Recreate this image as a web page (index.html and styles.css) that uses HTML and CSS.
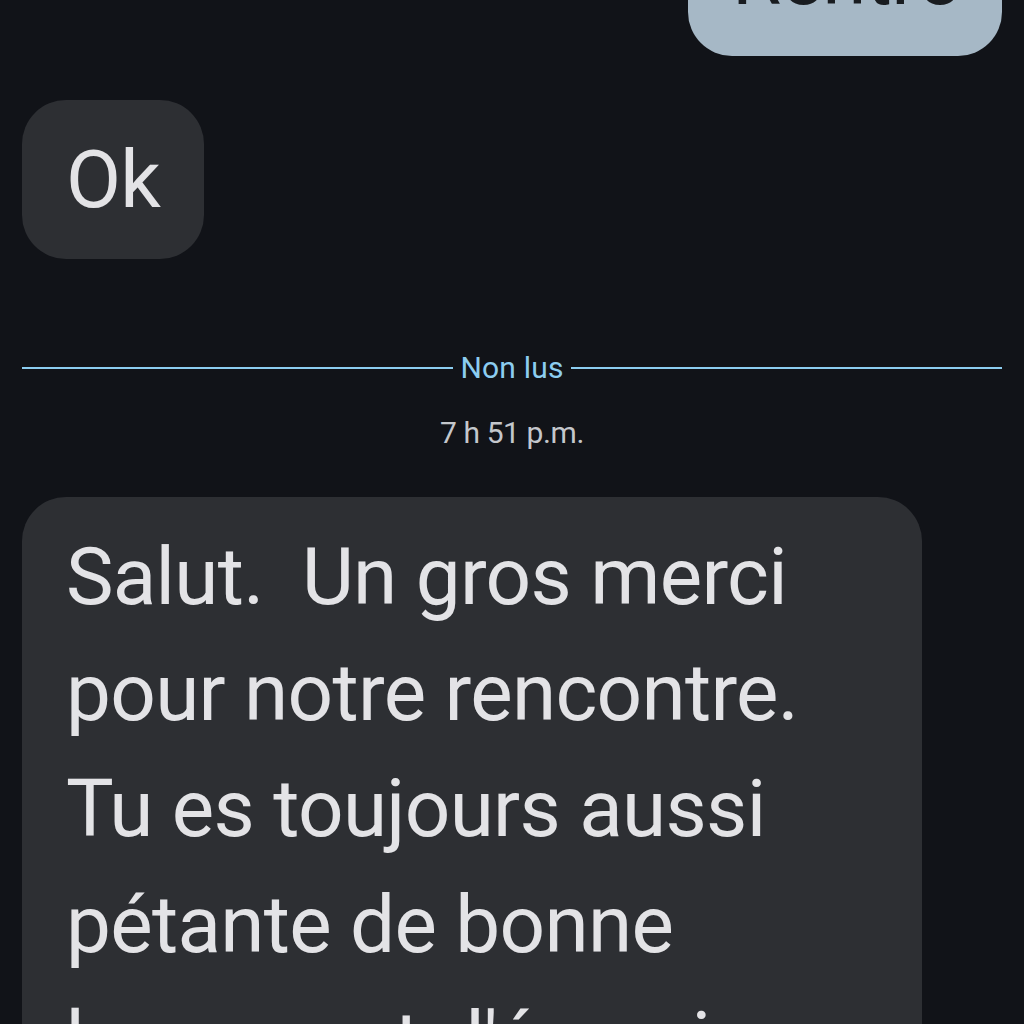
FILE: index.html
```html
<!DOCTYPE html>
<html lang="fr">
<head>
<meta charset="utf-8">
<link rel="stylesheet" href="styles.css">
</head>
<body>
<main class="thread">
  <div class="row row-out first">
    <div class="bubble bubble-out">Rentré</div>
  </div>
  <div class="row row-in">
    <div class="bubble bubble-in">Ok</div>
  </div>
  <div class="divider">
    <span class="line"></span>
    <span class="divider-label">Non lus</span>
    <span class="line"></span>
  </div>
  <div class="timestamp">7 h 51 p.m.</div>
  <div class="row row-in">
    <div class="bubble bubble-in wide">Salut.&nbsp; Un gros merci pour notre rencontre. Tu es toujours aussi pétante de bonne humeur et d'énergie</div>
  </div>
</main>
</body>
</html>
```

FILE: styles.css
```css
html, body {
  margin: 0;
  padding: 0;
  background: #111318;
  height: 1024px;
  overflow: hidden;
}
.thread {
  padding: 0 22px;
  font-family: Roboto, "Noto Sans", sans-serif;
  display: flex;
  flex-direction: column;
}
.row {
  display: flex;
}
.row-out {
  justify-content: flex-end;
}
.row-in {
  justify-content: flex-start;
}
.first {
  margin-top: -103px;
}
.bubble {
  font-size: 80px;
  line-height: 116px;
  padding: 22px 44px 21px;
  border-radius: 44px;
  box-sizing: border-box;
  letter-spacing: -0.7px;
}
.bubble-out {
  background: #a6b8c6;
  color: #191c20;
  width: 314px;
  text-align: center;
}
.bubble-in {
  background: #2d2f33;
  color: #e3e3e6;
  margin-top: 44px;
}
.wide {
  width: 900px;
  margin-top: 47px;
}
.divider {
  display: flex;
  align-items: center;
  gap: 7px;
  margin-top: 92px;
  height: 34px;
}
.line {
  flex: 1;
  height: 2px;
  background: #8ccdf0;
}
.divider-label {
  font-size: 30px;
  color: #8ccdf0;
  line-height: 34px;
  letter-spacing: 0.2px;
}
.timestamp {
  text-align: center;
  font-size: 30px;
  color: #c4c7cc;
  margin-top: 31px;
  line-height: 34px;
  letter-spacing: -0.4px;
}
```
